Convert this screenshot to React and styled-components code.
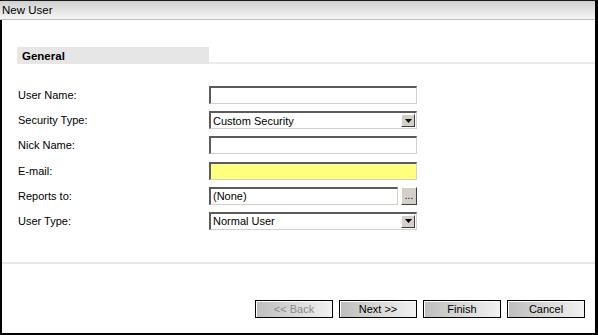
import React from 'react'
import styled, { createGlobalStyle } from 'styled-components'

const GlobalStyle = createGlobalStyle`
  * { box-sizing: border-box; }
  html, body { margin: 0; padding: 0; background: #ffffff; }
  body {
    font-family: "Liberation Sans", Arial, sans-serif;
    font-size: 11px;
    color: #000000;
  }
`

const fields = [
  { label: 'User Name:', kind: 'text' },
  { label: 'Security Type:', kind: 'select', value: 'Custom Security' },
  { label: 'Nick Name:', kind: 'text' },
  { label: 'E-mail:', kind: 'text', required: true },
  { label: 'Reports to:', kind: 'lookup', value: '(None)' },
  { label: 'User Type:', kind: 'select', value: 'Normal User' },
]

const ArrowIcon = () => (
  <svg width="7" height="4" viewBox="0 0 7 4">
    <path d="M0 0 H7 L3.5 4 Z" fill="#000" />
  </svg>
)

const Field = ({ field }) => {
  if (field.kind === 'select') {
    return (
      <Select>
        <SelectValue>{field.value}</SelectValue>
        <DropButton><ArrowIcon /></DropButton>
      </Select>
    )
  }
  if (field.kind === 'lookup') {
    return (
      <LookupRow>
        <Input><SelectValue>{field.value}</SelectValue></Input>
        <DotsButton>...</DotsButton>
      </LookupRow>
    )
  }
  return <Input required={field.required} />
}

const App = () => {
  return (
    <>
      <GlobalStyle />
      <Window>
        <TitleBar>New User</TitleBar>
        <Body>
          <SectionRow>
            <SectionTitle>General</SectionTitle>
            <SectionLine />
          </SectionRow>
          <Form>
            {fields.map(f => (
              <React.Fragment key={f.label}>
                <Label>{f.label}</Label>
                <Field field={f} />
              </React.Fragment>
            ))}
          </Form>
          <Divider />
          <Buttons>
            <Button disabled>&lt;&lt; Back</Button>
            <Button>Next &gt;&gt;</Button>
            <Button>Finish</Button>
            <Button>Cancel</Button>
          </Buttons>
        </Body>
      </Window>
    </>
  )
}

export default App

const Window = styled.div`
  width: 598px;
  height: 335px;
  display: flex;
  flex-direction: column;
  border-top: 1px solid #1a1a1a;
  border-left: 2px solid #000000;
  border-right: 3px solid #000000;
  border-bottom: 2px solid #000000;
  background: #ffffff;
`

const TitleBar = styled.div`
  height: 19px;
  margin-left: -2px;
  padding-left: 2px;
  display: flex;
  align-items: center;
  background: linear-gradient(to bottom, #cfcfcf, #f6f6f6);
  border-bottom: 1px solid #bdbdbd;
  font-size: 11.5px;
  color: #000;
`

const Body = styled.div`
  flex: 1;
  display: flex;
  flex-direction: column;
  padding-top: 27px;
`

const SectionRow = styled.div`
  display: flex;
  align-items: flex-end;
  padding-left: 15px;
`

const SectionTitle = styled.div`
  width: 192px;
  height: 17px;
  background: #e6e6e6;
  font-weight: bold;
  font-size: 11.5px;
  display: flex;
  align-items: center;
  padding-left: 5px;
`

const SectionLine = styled.div`
  flex: 1;
  height: 2px;
  background: #ebebeb;
`

const Form = styled.div`
  display: grid;
  grid-template-columns: 191px 208px;
  grid-auto-rows: 18px;
  row-gap: 7.2px;
  padding-left: 16px;
  margin-top: 22px;
`

const Label = styled.div`
  display: flex;
  align-items: center;
  font-size: 11px;
`

const Input = styled.div`
  height: 18px;
  flex: 1;
  display: flex;
  align-items: center;
  background: ${p => (p.required ? '#ffff80' : '#ffffff')};
  border-top: 2px solid #5c5c5c;
  border-left: 2px solid #5c5c5c;
  border-bottom: 1px solid #d4d0c8;
  border-right: 1px solid #d4d0c8;
`

const Select = styled(Input)`
  justify-content: space-between;
  padding-right: 1px;
`

const SelectValue = styled.span`
  padding-left: 2px;
  font-size: 11px;
`

const DropButton = styled.div`
  width: 14px;
  height: 13px;
  display: flex;
  align-items: center;
  justify-content: center;
  background: #d4d0c8;
  border-top: 1px solid #ffffff;
  border-left: 1px solid #ffffff;
  border-right: 1px solid #404040;
  border-bottom: 1px solid #404040;
`

const LookupRow = styled.div`
  display: flex;
  gap: 3px;
`

const DotsButton = styled.div`
  width: 16px;
  height: 18px;
  display: flex;
  align-items: flex-end;
  justify-content: center;
  padding-bottom: 3px;
  font-size: 10px;
  background: #d4d0c8;
  border-top: 1px solid #ffffff;
  border-left: 1px solid #ffffff;
  border-right: 1px solid #404040;
  border-bottom: 1px solid #404040;
`

const Divider = styled.div`
  height: 2px;
  background: #e6e6e6;
  margin-top: 32px;
`

const Buttons = styled.div`
  display: flex;
  justify-content: flex-end;
  gap: 6px;
  padding-right: 10px;
  margin-top: 36px;
`

const Button = styled.button`
  width: 78px;
  height: 18px;
  padding: 0;
  font-family: "Liberation Sans", Arial, sans-serif;
  font-size: 11px;
  color: ${p => (p.disabled ? '#8a8a8a' : '#000000')};
  border: 1px solid #000000;
  box-shadow: inset 1px 1px 0 #ffffff;
  background: linear-gradient(to right, #bdbdbd, #f2f2f2);
`
